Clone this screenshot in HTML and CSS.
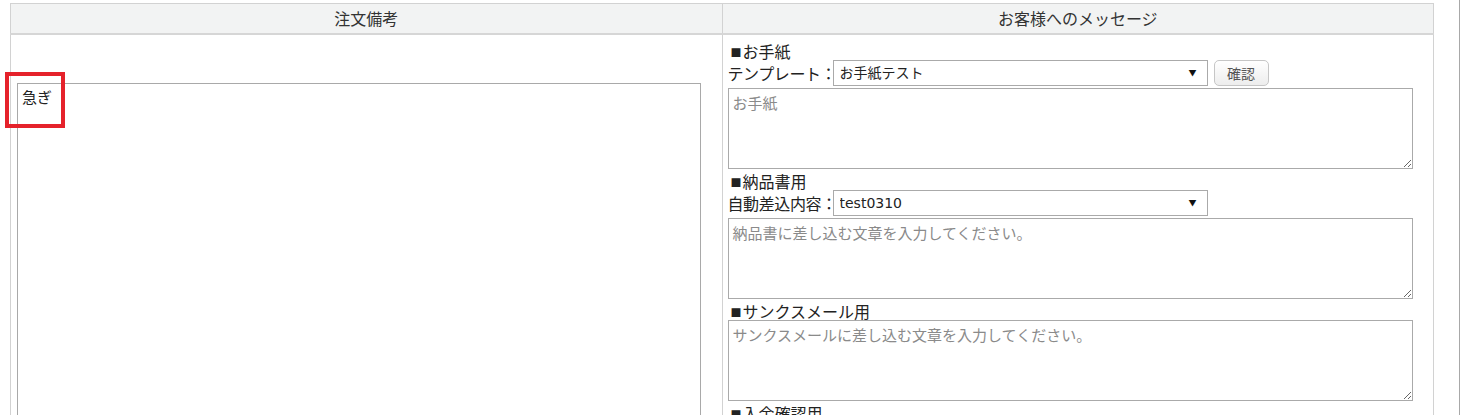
FILE: index.html
```html
<html>
<head>
	<title>受注詳細</title>
	<link rel="stylesheet" href="styles.css">
	<meta charset="utf-8">
</head>
<body>
	<div id="page">
		<table class="memoTable">
		<tr>
			<th>注文備考</th>
			<th>お客様へのメッセージ</th>
		</tr>
		<tr>
			<td class="memoCell">
				<div class="memoWrap">
					<textarea class="memoText">急ぎ</textarea>
					<div class="mark"></div>
				</div>
			</td>
			<td class="msgCell">
				<div class="sectionTitle"><span class="sq">■</span>お手紙</div>
				<div class="selectRow">
					<span class="selectLabel">テンプレート：</span>
					<span class="selectBox"><select><option>お手紙テスト</option></select></span>
					<button class="btnCheck">確認</button>
				</div>
				<textarea class="msgText" placeholder="お手紙"></textarea>

				<div class="sectionTitle"><span class="sq">■</span>納品書用</div>
				<div class="selectRow">
					<span class="selectLabel">自動差込内容：</span>
					<span class="selectBox"><select><option>test0310</option></select></span>
				</div>
				<textarea class="msgText" placeholder="納品書に差し込む文章を入力してください。"></textarea>

				<div class="sectionTitle"><span class="sq">■</span>サンクスメール用</div>
				<textarea class="msgText" placeholder="サンクスメールに差し込む文章を入力してください。"></textarea>

				<div class="sectionTitle"><span class="sq">■</span>入金確認用</div>
				<textarea class="msgText" placeholder="入金確認メールに差し込む文章を入力してください。"></textarea>
			</td>
		</tr>
		</table>
	</div>
</body>
</html>
```

FILE: styles.css
```css
	html, body {
		margin: 0;
		padding: 0;
		background-color: white;
		overflow: hidden;
	}

	body {
		color: #222;
		font-family: "Noto Sans CJK JP", sans-serif;
		font-size: 15px;
		line-height: 20px;
	}

	#page {
		width: 1449px;
		height: 415px;
		padding: 3px 0 0 10px;
		border-right: 1px solid #a8a8a8;
	}

	.memoTable {
		width: 1424px;
		border-collapse: collapse;
		table-layout: fixed;
	}

	.memoTable th {
		height: 30px;
		padding: 0;
		background-color: #f2f3f3;
		border: 1px solid #d2d2d2;
		border-bottom: 2px solid #d6d6d6;
		font-weight: normal;
		color: #333;
		text-align: center;
		vertical-align: middle;
	}

	.memoTable td {
		border: 1px solid #d2d2d2;
		vertical-align: top;
	}

	.memoCell {
		padding: 48px 20px 0 6px;
	}

	.memoWrap {
		position: relative;
	}

	.memoText {
		display: block;
		width: 684px;
		height: 400px;
		margin: 0;
		padding: 3px 4px;
		border: 1px solid #a9a9a9;
		font-family: "Noto Sans CJK JP", sans-serif;
		font-size: 15px;
		line-height: 20px;
		color: #222;
		box-sizing: border-box;
		resize: vertical;
	}

	/* red annotation frame drawn over the text */
	.mark {
		position: absolute;
		left: -12px;
		top: -11px;
		width: 60px;
		height: 56px;
		border: 4px solid #e5222b;
		box-sizing: border-box;
	}

	.msgCell {
		padding: 4px 0 0 5px;
	}

	.sectionTitle {
		height: 20px;
		padding-left: 3px;
		white-space: nowrap;
	}

	.sq {
		font-size: 11px;
		margin-right: 1px;
		vertical-align: 1px;
	}

	.selectRow {
		display: flex;
		align-items: center;
		height: 28px;
	}

	.selectLabel {
		width: 105px;
		white-space: nowrap;
		letter-spacing: -0.4px;
	}

	.selectBox {
		position: relative;
		display: inline-block;
	}

	.selectBox select {
		-webkit-appearance: none;
		appearance: none;
		width: 375px;
		height: 26px;
		margin: 0;
		padding: 0 20px 0 6px;
		background-color: white;
		border: 1px solid #aaa;
		border-radius: 0;
		font-family: "DejaVu Sans", "Noto Sans CJK JP", sans-serif;
		font-size: 14px;
		color: #222;
	}

	.selectBox::after {
		content: "▼";
		position: absolute;
		right: 11px;
		top: 8px;
		font-size: 8px;
		line-height: 10px;
		color: #111;
		pointer-events: none;
	}

	.btnCheck {
		width: 55px;
		height: 26px;
		margin-left: 6px;
		padding: 0;
		background: linear-gradient(#ffffff, #ededed);
		border: 1px solid #c6c6c6;
		border-radius: 5px;
		font-family: "Noto Sans CJK JP", sans-serif;
		font-size: 14px;
		color: #555;
	}

	.msgText {
		display: block;
		width: 685px;
		height: 81px;
		margin: 1px 0 0 0;
		padding: 4px 4px;
		border: 1px solid #aaa;
		font-family: "Noto Sans CJK JP", sans-serif;
		font-size: 15px;
		line-height: 20px;
		color: #222;
		box-sizing: border-box;
		resize: vertical;
	}

	.msgText::placeholder {
		color: #8a8a8a;
	}
```
